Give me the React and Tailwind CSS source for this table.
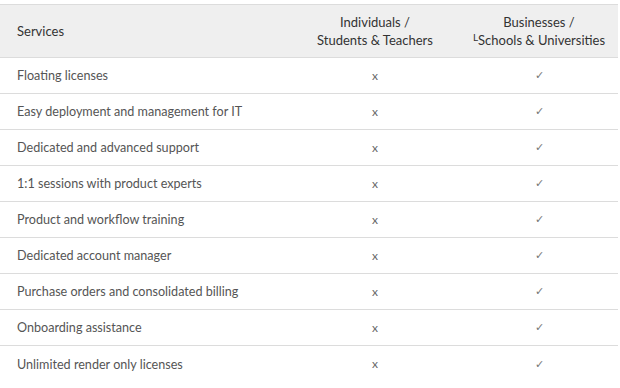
import React from "react";

const rows = [
  "Floating licenses",
  "Easy deployment and management for IT",
  "Dedicated and advanced support",
  "1:1 sessions with product experts",
  "Product and workflow training",
  "Dedicated account manager",
  "Purchase orders and consolidated billing",
  "Onboarding assistance",
  "Unlimited render only licenses",
];

export default function App() {
  return (
    <div className="w-[620px] h-[388px] bg-white pt-[4px] overflow-hidden" style={{ fontFamily: "Lato, 'Liberation Sans', sans-serif" }}>
      <div className="w-[618px] border-t border-[#dcdcdc]">
        <div className="grid grid-cols-[300px_150px_168px] h-[53px] bg-[#efefef] border-b border-[#dcdcdc] text-[13px] text-[#333] leading-[18px]">
          <div className="flex items-center pl-[17px]">Services</div>
          <div className="flex flex-col items-center justify-center text-center">
            <span>Individuals /</span>
            <span>Students &amp; Teachers</span>
          </div>
          <div className="flex flex-col items-center justify-center text-center pl-[10px]">
            <span>Businesses /</span>
            <span>
              <span className="text-[10px] align-top relative top-[-3px]">L</span>Schools &amp; Universities
            </span>
          </div>
        </div>
        {rows.map((r, i) => (
          <div
            key={r}
            className={`grid grid-cols-[300px_150px_168px] h-[36px] text-[12.6px] text-[#555] ${i < rows.length - 1 ? "border-b border-[#dcdcdc]" : ""}`}
          >
            <div className="flex items-center pl-[17px] pt-[2px]">{r}</div>
            <div className="flex items-center justify-center text-[#666] text-[12px]">x</div>
            <div className="flex items-center justify-center pl-[10px] text-[#777] text-[11px]">✓</div>
          </div>
        ))}
      </div>
    </div>
  );
}
